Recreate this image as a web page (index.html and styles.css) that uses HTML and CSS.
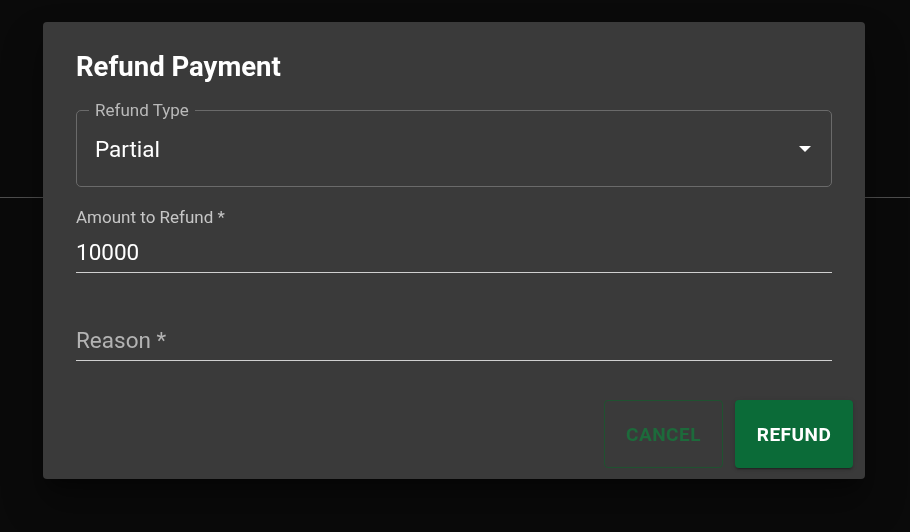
FILE: index.html
```html
<!DOCTYPE html>
<html lang="en">
<head>
	<meta charset="UTF-8">
	<title>Refund Payment</title>
	<link rel="stylesheet" href="styles.css">
</head>
<body>

	<div class="page">
		<div class="page-head"></div>
	</div><!-- .page -->

	<div class="overlay">
		<div class="dialog">
			<h2 class="dialog-tit">Refund Payment</h2>

			<div class="select">
				<span class="select-label">Refund Type</span>
				<span class="select-value">Partial</span>
				<span class="select-arrow"></span>
			</div>

			<div class="field field-filled">
				<label class="field-label">Amount to Refund *</label>
				<div class="field-value">10000</div>
			</div>

			<div class="field field-empty">
				<div class="field-placeholder">Reason *</div>
			</div>

			<div class="actions">
				<button class="btn btn-cancel" disabled>Cancel</button>
				<button class="btn btn-refund">Refund</button>
			</div>
		</div><!-- .dialog -->
	</div><!-- .overlay -->

</body>
</html>
```

FILE: styles.css
```css
*{ box-sizing: border-box;}
html, body{ margin: 0; padding: 0; height: 100%;}
body{ background: #0a0a0a; font-family: Roboto, "Liberation Sans", Arial, sans-serif; color: #fff; overflow: hidden;}

.page-head{ height: 198px; border-bottom: 1px solid #4e4e4e;}

.overlay{ position: fixed; top: 0; left: 0; right: 0; bottom: 0; display: flex; justify-content: center; align-items: flex-start; padding: 22px 0 0 0;}
.dialog{ display: flex; flex-direction: column; margin-left: -2px; padding: 29px 12px 0 33px; width: 822px; height: 457px; background: #3a3a3a; border-radius: 4px; box-shadow: 0 11px 15px -7px rgba(0,0,0,.4), 0 24px 38px 3px rgba(0,0,0,.3);}
.dialog > *{ flex-shrink: 0;}

.dialog-tit{ margin: 0; height: 32px; line-height: 32px; font-size: 27.5px; font-weight: 700; color: #fff;}

.select{ position: relative; display: flex; align-items: center; margin: 27px 21px 0 0; padding: 0 20px 0 18px; height: 77px; border: 1px solid #6a6a6a; border-radius: 5px;}
.select-label{ position: absolute; top: -11px; left: 12px; padding: 0 6px; line-height: 20px; font-size: 17px; color: #b9b9b9; background: #3a3a3a;}
.select-value{ flex: 1; font-size: 22.5px; color: #fff;}
.select-arrow{ width: 0; height: 0; border-left: 6px solid transparent; border-right: 6px solid transparent; border-top: 6px solid #fff;}

.field{ margin-right: 21px; border-bottom: 1px solid #cfcfcf;}
.field-filled{ margin-top: 20px; height: 66px; padding-bottom: 5px;}
.field-label{ display: block; height: 20px; line-height: 20px; font-size: 17px; color: #c6c6c6;}
.field-value{ margin-top: 10px; height: 30px; line-height: 30px; font-size: 22.5px; color: #fff;}
.field-empty{ display: flex; align-items: flex-end; height: 88px; padding-bottom: 7px;}
.field-placeholder{ line-height: 26px; font-size: 22.5px; color: #b3b3b3;}

.actions{ display: flex; justify-content: flex-end; gap: 12px; margin-top: 39px;}
.btn{ height: 68px; padding: 0; font-family: inherit; font-size: 19px; font-weight: 700; letter-spacing: .5px; text-transform: uppercase; border-radius: 4px;}
.btn-cancel{ width: 119px; color: #1d6a3b; background: transparent; border: 1px solid #1f5230;}
.btn-refund{ width: 118px; color: #fff; background: #0b6b38; border: 0; box-shadow: 0 3px 1px -2px rgba(0,0,0,.2), 0 2px 2px 0 rgba(0,0,0,.14), 0 1px 5px 0 rgba(0,0,0,.12);}
```
